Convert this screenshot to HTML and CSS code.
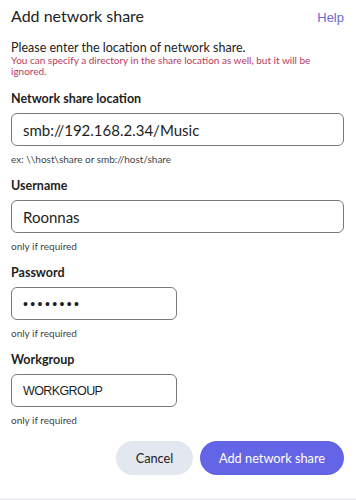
FILE: index.html
```html
<!DOCTYPE html>
<html>
<head>
<meta charset="utf-8">
<link rel="stylesheet" href="styles.css">
</head>
<body>
<div class="dialog">
  <div class="header">
    <h1 class="title">Add network share</h1>
    <a class="help">Help</a>
  </div>
  <p class="intro">Please enter the location of network share.</p>
  <p class="warn">You can specify a directory in the share location as well, but it will be ignored.</p>

  <div class="field">
    <label class="label">Network share location</label>
    <div class="input wide">smb://192.168.2.34/Music</div>
    <div class="hint">ex: \\host\share or smb://host/share</div>
  </div>

  <div class="field">
    <label class="label">Username</label>
    <div class="input wide">Roonnas</div>
    <div class="hint">only if required</div>
  </div>

  <div class="field">
    <label class="label">Password</label>
    <div class="input narrow dots">••••••••</div>
    <div class="hint">only if required</div>
  </div>

  <div class="field">
    <label class="label">Workgroup</label>
    <div class="input narrow arial">WORKGROUP</div>
    <div class="hint">only if required</div>
  </div>

  <div class="actions">
    <button class="btn cancel">Cancel</button>
    <button class="btn primary">Add network share</button>
  </div>
</div>
<div class="bottom-strip"></div>
</body>
</html>
```

FILE: styles.css
```css
html, body {
  margin: 0;
  padding: 0;
  background: #ffffff;
}
body {
  font-family: Lato, "Noto Sans", sans-serif;
  color: #222;
  width: 356px;
  height: 500px;
  position: relative;
  overflow: hidden;
}
.dialog {
  padding: 0 12px 0 11px;
}
.header {
  display: flex;
  justify-content: space-between;
  align-items: baseline;
  padding-top: 5px;
  height: 22px;
}
.title {
  margin: 0;
  font-size: 16px;
  font-weight: 400;
  line-height: 22px;
  color: #1e1e1e;
}
.help {
  font-family: "Liberation Sans", Arial, sans-serif;
  font-size: 13px;
  color: #6a6ad0;
}
.intro {
  margin: 12.7px 0 0;
  font-size: 12.5px;
  line-height: 15px;
  color: #222;
}
.warn {
  margin: 0;
  font-size: 10px;
  line-height: 11px;
  color: #b83a62;
}
.field {
  margin-top: 14.6px;
}
.field + .field {
  margin-top: 13px;
}
.label {
  display: block;
  font-weight: 700;
  font-size: 12.5px;
  line-height: 16px;
  color: #1e1e1e;
}
.input {
  margin-top: 6px;
  box-sizing: border-box;
  height: 33px;
  border: 1px solid #7a7a7a;
  border-radius: 6px;
  padding: 0 11px;
  display: flex;
  align-items: center;
  font-size: 15px;
  color: #1e1e1e;
}
.wide {
  width: 333px;
}
.narrow {
  width: 166px;
}
.dots {
  font-family: "Liberation Sans", Arial, sans-serif;
  font-size: 14px;
  letter-spacing: 2.4px;
}
.arial {
  font-family: "Liberation Sans", Arial, sans-serif;
  font-size: 12.5px;
  letter-spacing: -0.6px;
}
.hint {
  margin-top: 7px;
  font-size: 10px;
  line-height: 12px;
  color: #444;
}
.actions {
  display: flex;
  justify-content: flex-end;
  gap: 7px;
  margin-top: 15px;
  width: 333px;
}
.btn {
  height: 34px;
  border: none;
  border-radius: 17px;
  font-family: Lato, "Noto Sans", sans-serif;
  font-size: 12.75px;
  padding: 0;
}
.cancel {
  width: 77px;
  background: #e3e7ef;
  color: #222;
}
.primary {
  width: 144px;
  background: #6465e6;
  color: #ffffff;
}
.bottom-strip {
  position: absolute;
  left: 0;
  right: 0;
  bottom: 0;
  height: 2px;
  background: #f0f0f2;
}
```
